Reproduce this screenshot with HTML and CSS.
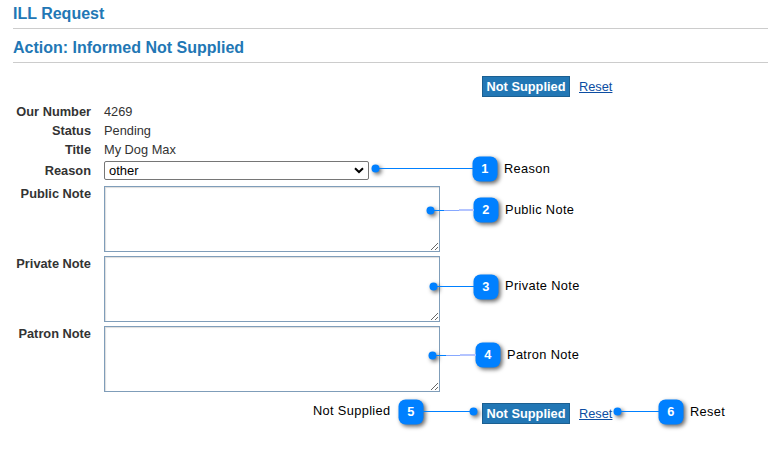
FILE: index.html
```
<!DOCTYPE html>
<html lang="en">

<head>
    <meta charset="utf-8">
    <title>ILL Request</title>
    <link rel="stylesheet" href="styles.css">
</head>

<body>
    <main>
        <h1>ILL Request</h1>
        <h2>Action: Informed Not Supplied</h2>
        <form>
            <div class="actions">
                <button type="button" class="submit">Not Supplied</button>
                <a class="reset" href="#">Reset</a>
            </div>
            <div class="fields">
                <span class="label">Our Number</span>
                <span class="value">4269</span>
                <span class="label">Status</span>
                <span class="value">Pending</span>
                <span class="label">Title</span>
                <span class="value">My Dog Max</span>
                <label class="label" for="reason">Reason</label>
                <div class="select">
                    <select id="reason">
                        <option>other</option>
                    </select>
                    <svg class="arrow" width="10" height="7" viewBox="0 0 10 7">
                        <path d="M1 1.2 L5 5 L9 1.2" />
                    </svg>
                </div>
                <label class="label note" for="public">Public Note</label>
                <textarea id="public"></textarea>
                <label class="label note" for="private">Private Note</label>
                <textarea id="private"></textarea>
                <label class="label note" for="patron">Patron Note</label>
                <textarea id="patron"></textarea>
            </div>
            <div class="actions bottom">
                <button type="button" class="submit">Not Supplied</button>
                <a class="reset" href="#">Reset</a>
            </div>
        </form>
    </main>

    <!-- numbered callouts over the form -->
    <svg class="callouts" width="768" height="451" viewBox="0 0 768 451">
        <g class="shadow">
            <circle cx="375.5" cy="168.5" r="4" />
            <rect x="472.5" y="156.5" width="25" height="25" rx="7" />
            <circle cx="430.5" cy="210.5" r="4" />
            <rect x="473.5" y="197.5" width="25" height="25" rx="7" />
            <circle cx="433.5" cy="286.5" r="4" />
            <rect x="473.5" y="274.5" width="25" height="25" rx="7" />
            <circle cx="432.5" cy="355.5" r="4" />
            <rect x="475.5" y="342.5" width="25" height="25" rx="7" />
            <circle cx="473.5" cy="411.5" r="4" />
            <rect x="398.5" y="399.5" width="25" height="25" rx="7" />
            <circle cx="617.5" cy="411.5" r="4" />
            <rect x="658.5" y="399.5" width="25" height="25" rx="7" />
        </g>
        <g class="lines">
            <path d="M376 168.5H473" />
            <path d="M431 210.5H444" />
            <path class="mid" d="M444 210.5H459" />
            <path class="pale" d="M459 210H474" />
            <path d="M434 286.5H474" />
            <path d="M433 355.5H446" />
            <path class="mid" d="M446 355.5H460" />
            <path class="pale" d="M460 355H476" />
            <path d="M423 411.5H474" />
            <path d="M618 411.5H659" />
        </g>
        <g class="numbers">
            <text x="484.7" y="173">1</text>
            <text x="485.7" y="214">2</text>
            <text x="485.7" y="291">3</text>
            <text x="487.7" y="359">4</text>
            <text x="410.7" y="416">5</text>
            <text x="670.7" y="416">6</text>
        </g>
        <g class="names">
            <text x="504" y="173">Reason</text>
            <text x="505" y="214">Public Note</text>
            <text x="505" y="290">Private Note</text>
            <text x="507" y="359">Patron Note</text>
            <text x="313" y="415">Not Supplied</text>
            <text x="690" y="416">Reset</text>
        </g>
    </svg>
</body>

</html>
```
FILE: styles.css
```
* {
    box-sizing: border-box;
    margin: 0;
    padding: 0;
}

body {
    position: relative;
    height: 451px;
    overflow: hidden;
    font-family: "Liberation Sans", Arial, sans-serif;
    font-size: 12.8px;
    color: #333;
    background-color: #fff;
}

main {
    padding-left: 13px;
}

h1,
h2 {
    font-size: 16px;
    line-height: 18px;
    color: #2277b5;
    border-bottom: 1px solid #ccc;
}

h1 {
    height: 29px;
    padding-top: 5px;
}

h2 {
    height: 34px;
    padding-top: 10px;
}

.actions {
    display: flex;
    align-items: center;
    gap: 9px;
    height: 21px;
    margin: 13px 0 5px 469px;
}

.bottom {
    margin-top: 11px;
}

.submit {
    width: 88px;
    height: 21px;
    font: bold 12.8px "Liberation Sans", Arial, sans-serif;
    color: #fff;
    background-color: #2277b5;
    border: 1px solid #1b5f91;
}

.reset {
    color: #0c4da2;
}

.fields {
    display: grid;
    grid-template-columns: 78px 336px;
    grid-template-rows: 19px 19px 19px 23px;
    column-gap: 13px;
    row-gap: 0;
}

.label {
    text-align: right;
    font-weight: bold;
    line-height: 19px;
}

.value {
    line-height: 19px;
}

.select {
    position: relative;
    width: 265px;
    height: 19px;
    margin-top: 2px;
}

select {
    display: block;
    width: 265px;
    height: 19px;
    padding-left: 4px;
    appearance: none;
    font: 13px "Liberation Sans", Arial, sans-serif;
    color: #000;
    background-color: #fff;
    border: 1px solid #767676;
    border-radius: 2px;
}

.arrow {
    position: absolute;
    top: 6px;
    right: 5px;
    fill: none;
    stroke: #000;
    stroke-width: 2;
}

[for="reason"] {
    padding-top: 2px;
}

.note {
    padding-top: 2px;
}

textarea {
    display: block;
    width: 336px;
    height: 66px;
    margin: 4px 0 0;
    border: 1px solid #7f9db9;
    box-shadow: inset 1px 1px 1px #ddd;
    resize: both;
}

/* Callouts */
.callouts {
    position: absolute;
    top: 0;
    left: 0;
    pointer-events: none;
}

.shadow {
    fill: #0080ff;
    filter: drop-shadow(2px 2px 2px rgba(0, 0, 0, 0.6));
}

.lines {
    fill: none;
    stroke: #0080ff;
}

.lines .mid {
    stroke: #86a8ff;
}

.lines .pale {
    stroke: #b4c4ff;
    stroke-width: 2;
}

.numbers {
    fill: #fff;
    font-weight: bold;
    text-anchor: middle;
}

.names {
    fill: #000;
    letter-spacing: 0.35px;
}
```
